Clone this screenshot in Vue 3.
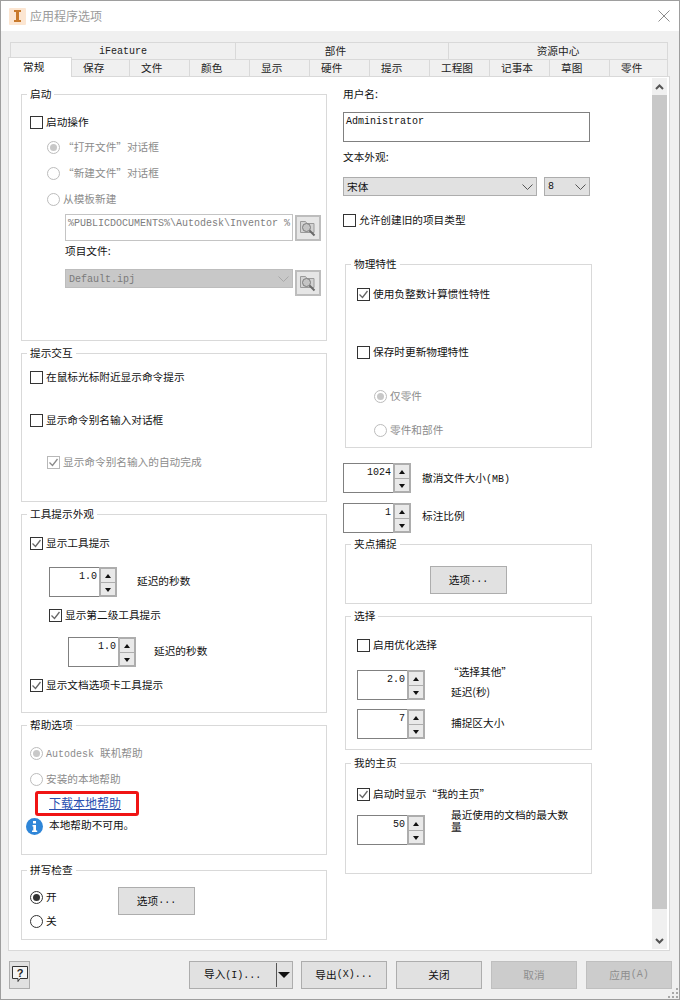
<script setup>
const row2 = [
  { t: '保存', w: 58 }, { t: '文件', w: 60 }, { t: '颜色', w: 60 }, { t: '显示', w: 60 }, { t: '硬件', w: 60 },
  { t: '提示', w: 60 }, { t: '工程图', w: 60 }, { t: '记事本', w: 60 }, { t: '草图', w: 60 }, { t: '零件', w: 58 }
]
</script>

<template>
  <div class="win">
    <header class="title">
      <svg class="appicon" width="17" height="17" viewBox="0 0 17 17">
        <rect width="17" height="17" rx="1" fill="#fce6d2" />
        <path d="M5 2h7v2h-2v8h2v2H5v-2h2V4H5z" fill="#c97a2c" />
      </svg>
      <span class="title-text">应用程序选项</span>
      <svg class="close" width="12" height="12" viewBox="0 0 12 12">
        <path d="M.5.5l11 11M11.500.5l-11 11" stroke="#8c8c8c" fill="none" />
      </svg>
    </header>

    <div class="body">
      <div class="tabs">
        <div class="tabrow first">
          <div class="tab t1a">iFeature</div>
          <div class="tab t1b">部件</div>
          <div class="tab t1c">资源中心</div>
        </div>
        <div class="tabrow second">
          <div v-for="x in row2" :key="x.t" class="tab" :style="{ width: x.w + 'px' }">{{ x.t }}</div>
        </div>
        <div class="tab-active">常规</div>
      </div>

      <div class="panel">
        <div class="content">
          <div class="col left">
            <section class="group g-start">
              <span class="legend">启动</span>
              <label class="line mt19"><i class="cb"></i>启动操作</label>
              <label class="line mt9 in17 dim"><i class="rd on"></i>“打开文件”对话框</label>
              <label class="line mt10 in17 dim"><i class="rd"></i>“新建文件”对话框</label>
              <label class="line mt10 in17 dim"><i class="rd"></i>从模板新建</label>
              <div class="pick mt7">
                <div class="path">%PUBLICDOCUMENTS%\Autodesk\Inventor %</div>
                <button class="browse">
                  <svg width="18" height="18" viewBox="0 0 18 18">
                    <path d="M1.500 2.500h5l1.500 2h7v9h-13.500z" fill="#d2d2d2" stroke="#9a9a9a" />
                    <circle cx="7.500" cy="8.500" r="4" fill="#c4c4c4" stroke="#7c7c7c" />
                    <path d="M10.500 11.500l5 5" stroke="#6a6a6a" stroke-width="2" />
                  </svg>
                </button>
              </div>
              <div class="line mt2 in44">项目文件:</div>
              <div class="pick mt10">
                <div class="sel disabled wide"><span class="mono">Default.ipj</span><svg class="chev" width="11" height="6" viewBox="0 0 11 6"><path d="M.5.500l5 5 5-5" stroke="#a8a8a8" fill="none" /></svg></div>
                <button class="browse lower">
                  <svg width="18" height="18" viewBox="0 0 18 18">
                    <path d="M1.500 2.500h5l1.500 2h7v9h-13.500z" fill="#d2d2d2" stroke="#9a9a9a" />
                    <circle cx="7.500" cy="8.500" r="4" fill="#c4c4c4" stroke="#7c7c7c" />
                    <path d="M10.500 11.500l5 5" stroke="#6a6a6a" stroke-width="2" />
                  </svg>
                </button>
              </div>
            </section>

            <section class="group g-hint">
              <span class="legend">提示交互</span>
              <label class="line mt15"><i class="cb"></i>在鼠标光标附近显示命令提示</label>
              <label class="line mt27"><i class="cb"></i>显示命令别名输入对话框</label>
              <label class="line mt26 in17 dim"><i class="cb checked off"><svg width="11" height="11" viewBox="0 0 11 11"><path d="M1.500 5.500l3 3 5-6.500" stroke="#8a8a8a" stroke-width="1.300" fill="none" /></svg></i>显示命令别名输入的自动完成</label>
            </section>

            <section class="group g-tip">
              <span class="legend">工具提示外观</span>
              <label class="line mt20"><i class="cb"><svg width="11" height="11" viewBox="0 0 11 11"><path d="M1.500 5.500l3 3 5-6.500" stroke="#666" stroke-width="1.300" fill="none" /></svg></i>显示工具提示</label>
              <div class="spinrow mt16 in19">
                <div class="spin"><span class="val mono">1.0</span><div class="btns"><b class="up"></b><b class="dn"></b></div></div>
                <span class="spinlabel l20">延迟的秒数</span>
              </div>
              <label class="line mt10 in19"><i class="cb"><svg width="11" height="11" viewBox="0 0 11 11"><path d="M1.500 5.500l3 3 5-6.500" stroke="#666" stroke-width="1.300" fill="none" /></svg></i>显示第二级工具提示</label>
              <div class="spinrow mt14 in38">
                <div class="spin"><span class="val mono">1.0</span><div class="btns"><b class="up"></b><b class="dn"></b></div></div>
                <span class="spinlabel l18">延迟的秒数</span>
              </div>
              <label class="line mt10"><i class="cb"><svg width="11" height="11" viewBox="0 0 11 11"><path d="M1.500 5.500l3 3 5-6.500" stroke="#666" stroke-width="1.300" fill="none" /></svg></i>显示文档选项卡工具提示</label>
            </section>

            <section class="group g-help">
              <span class="legend">帮助选项</span>
              <label class="line mt19 dim"><i class="rd on"></i><span class="mono brand">Autodesk&nbsp;</span>联机帮助</label>
              <label class="line mt10 dim"><i class="rd"></i>安装的本地帮助</label>
              <a class="link">下载本地帮助<span class="redbox"></span></a>
              <div class="info">
                <svg width="17" height="17" viewBox="0 0 17 17">
                  <circle cx="8.500" cy="8.500" r="8.500" fill="#2f86d8" />
                  <rect x="7" y="3" width="3" height="2.500" fill="#fff" />
                  <path d="M6.500 7H10v5.500h1.200V14H6v-1.500h1.300V8.500H6.500z" fill="#fff" />
                </svg>
                <span>本地帮助不可用。</span>
              </div>
            </section>

            <section class="group g-spell">
              <span class="legend">拼写检查</span>
              <div class="spell">
                <div class="spell-opts">
                  <label class="line"><i class="rd dark on"></i>开</label>
                  <label class="line mt8"><i class="rd dark"></i>关</label>
                </div>
                <button class="btn option">选项<span class="mono">...</span></button>
              </div>
            </section>
          </div>

          <div class="col right">
            <div class="bare first-bare">用户名:</div>
            <div class="textbox"><span class="mono">Administrator</span></div>
            <div class="bare mt7">文本外观:</div>
            <div class="fontrow">
              <div class="sel f1">宋体<svg class="chev" width="11" height="6" viewBox="0 0 11 6"><path d="M.5.500l5 5 5-5" stroke="#555" fill="none" /></svg></div>
              <div class="sel f2"><span class="mono">8</span><svg class="chev" width="11" height="6" viewBox="0 0 11 6"><path d="M.5.500l5 5 5-5" stroke="#555" fill="none" /></svg></div>
            </div>
            <label class="line mt16 flush"><i class="cb"></i>允许创建旧的项目类型</label>

            <section class="group rg g-phys">
              <span class="legend">物理特性</span>
              <label class="line mt21"><i class="cb"><svg width="11" height="11" viewBox="0 0 11 11"><path d="M1.500 5.500l3 3 5-6.500" stroke="#666" stroke-width="1.300" fill="none" /></svg></i>使用负整数计算惯性特性</label>
              <label class="line mt42"><i class="cb"></i>保存时更新物理特性</label>
              <label class="line mt28 in17 dim"><i class="rd on"></i>仅零件</label>
              <label class="line mt18 in17 dim"><i class="rd"></i>零件和部件</label>
            </section>

            <div class="spinrow mt15 flushspin">
              <div class="spin"><span class="val mono">1024</span><div class="btns"><b class="up"></b><b class="dn"></b></div></div>
              <span class="spinlabel l11 small-up">撤消文件大小<span class="mono">(MB)</span></span>
            </div>
            <div class="spinrow mt10 flushspin">
              <div class="spin"><span class="val mono">1</span><div class="btns"><b class="up"></b><b class="dn"></b></div></div>
              <span class="spinlabel l11 small-up2">标注比例</span>
            </div>

            <section class="group rg g-grip">
              <span class="legend">夹点捕捉</span>
              <button class="btn option grip-btn">选项<span class="mono">...</span></button>
            </section>

            <section class="group rg g-select">
              <span class="legend">选择</span>
              <label class="line mt20"><i class="cb"></i>启用优化选择</label>
              <div class="spinrow mt17">
                <div class="spin"><span class="val mono">2.0</span><div class="btns"><b class="up"></b><b class="dn"></b></div></div>
                <div class="stack">
                  <span class="quoted">“选择其他”</span>
                  <span>延迟(秒)</span>
                </div>
              </div>
              <div class="spinrow mt9">
                <div class="spin"><span class="val mono">7</span><div class="btns"><b class="up"></b><b class="dn"></b></div></div>
                <span class="spinlabel l26">捕捉区大小</span>
              </div>
            </section>

            <section class="group rg g-home">
              <span class="legend">我的主页</span>
              <label class="line mt22"><i class="cb"><svg width="11" height="11" viewBox="0 0 11 11"><path d="M1.500 5.500l3 3 5-6.500" stroke="#666" stroke-width="1.300" fill="none" /></svg></i>启动时显示“我的主页”</label>
              <div class="spinrow mt13">
                <div class="spin"><span class="val mono">50</span><div class="btns"><b class="up"></b><b class="dn"></b></div></div>
                <span class="wrap">最近使用的文档的最大数量</span>
              </div>
            </section>
          </div>
        </div>

        <div class="scroll">
          <svg class="arrow" width="9" height="6" viewBox="0 0 9 6"><path d="M1 5l3.500-3.500L8 5" stroke="#555" stroke-width="2" fill="none" /></svg>
          <div class="thumb"></div>
          <div class="track"></div>
          <svg class="arrow" width="9" height="6" viewBox="0 0 9 6"><path d="M1 1l3.500 3.500L8 1" stroke="#555" stroke-width="2" fill="none" /></svg>
        </div>
      </div>

      <footer class="foot">
        <button class="btn qm">
          <svg width="16" height="18" viewBox="0 0 16 18">
            <path d="M.5.500h15v12H8l-2 3v-3H.5z" fill="#f4f4f4" stroke="#333" />
            <text x="8" y="10.500" text-anchor="middle" font-size="11" font-weight="700" font-family="Liberation Sans" fill="#222">?</text>
          </svg>
        </button>
        <button class="btn import">
          <span class="import-text">导入<span class="mono">(I)...</span></span>
          <span class="split"></span>
          <span class="caret"></span>
        </button>
        <button class="btn big export">导出<span class="mono">(X)...</span></button>
        <button class="btn big close-btn">关闭</button>
        <button class="btn big dis cancel">取消</button>
        <button class="btn big dis apply">应用<span class="mono">(A)</span></button>
      </footer>
      <svg class="gripper" width="11" height="11" viewBox="0 0 11 11">
        <path d="M8 0h2v2H8zM4 4h2v2H4zM8 4h2v2H8zM0 8h2v2H0zM4 8h2v2H4zM8 8h2v2H8z" fill="#a8a8a8" />
      </svg>
    </div>
  </div>
</template>

<style>
html, body { margin: 0; background: #f0f0f0; }
</style>

<style scoped>
* { box-sizing: border-box; }
.win {
  width: 680px; height: 1000px; position: relative; overflow: hidden;
  border: 1px solid #9e9e9e;
  background: #f0f0f0; color: #111;
  font: 10.67px/16px "Noto Sans CJK SC", "Liberation Sans", sans-serif;
  display: flex; flex-direction: column;
}
.mono { font-family: "Liberation Mono", "Noto Sans CJK SC", monospace; font-size: 10px; }
.brand { margin-top: 3px; }
.title { height: 30px; flex: none; background: #fff; display: flex; align-items: center; padding: 0 8px; }
.appicon { margin-right: 4px; }
.title-text { color: #9a9a9a; font-size: 12px; }
.close { margin-left: auto; margin-right: 1px; margin-top: -1px; }

.body { flex: 1; display: flex; flex-direction: column; position: relative; padding: 11px 0 0 7px; }
.tabs { position: relative; height: 34px; flex: none; margin-left: 2px; width: 658px; }
.tabrow { display: flex; height: 17px; }
.tabrow.first { border-left: 1px solid #d9d9d9; }
.tabrow.second { padding-left: 62px; }
.tab {
  height: 18px; border: 1px solid #d9d9d9; border-left: 0; background: #f0f0f0;
  font-size: 10.67px; line-height: 16px; color: #222;
}
.first .tab { text-align: center; line-height: 18px; font-family: "Liberation Mono", "Noto Sans CJK SC", monospace; }
.second .tab { padding-left: 11px; }
.first .t1a { width: 225px; font-size: 10px; }
.first .t1b { width: 213px; padding-right: 13px; }
.first .t1c { width: 219px; }
.tab-active {
  position: absolute; left: -2px; top: 15px; width: 64px; height: 20px; z-index: 2;
  background: #fff; border: 1px solid #d9d9d9; border-bottom: 0;
  padding-left: 14px; line-height: 17px; color: #111;
}
.panel {
  flex: none; width: 662px; height: 875px; background: #fff; border: 1px solid #d9d9d9;
  display: flex; position: relative;
}
.content { width: 643px; display: flex; padding: 17px 0 0 12px; overflow: hidden; }
.col { display: flex; flex-direction: column; }
.left { width: 306px; }
.right { width: 249px; margin-left: 16px; }

.group { position: relative; border: 1px solid #d9d9d9; display: flex; flex-direction: column; padding-left: 8px; flex: none; }
.legend {
  position: absolute; left: 5px; top: -9px; background: #fff; padding: 0 3px;
  line-height: 16px; white-space: nowrap;
}
.g-start { height: 247px; }
.g-hint { height: 149px; margin-top: 12px; }
.g-tip { height: 199px; margin-top: 12px; }
.g-help { height: 130px; margin-top: 12px; }
.g-spell { height: 70px; margin-top: 15px; }
.rg { margin-left: 2px; width: 247px; padding-left: 11px; }
.g-phys { height: 184px; margin-top: 36px; }
.g-grip { height: 60px; margin-top: 11px; align-items: flex-start; }
.g-select { height: 134px; margin-top: 12px; }
.g-home { height: 111px; margin-top: 13px; }

.line { display: flex; align-items: center; height: 16px; white-space: nowrap; flex: none; }
.flush { margin-left: 0; }
.bare { height: 16px; flex: none; }
.first-bare { margin-top: -8px; }
.dim { color: #8c8c8c; }
.cb {
  width: 13px; height: 13px; border: 1px solid #333; background: #fff; flex: none;
  margin-right: 3px; display: flex; align-items: center; justify-content: center;
}
.cb.off { border-color: #b8b8b8; }
.rd {
  width: 13px; height: 13px; border: 1px solid #bcbcbc; border-radius: 50%; background: #fff; flex: none;
  margin-right: 3px; position: relative; display: block;
}
.rd.dark { border-color: #333; }
.rd.on::after {
  content: ""; position: absolute; left: 2px; top: 2px; width: 7px; height: 7px; border-radius: 50%; background: #c8c8c8;
}
.rd.dark.on::after { background: #333; }

.mt2 { margin-top: 2px; } .mt7 { margin-top: 7px; } .mt8 { margin-top: 8px; } .mt9 { margin-top: 9px; }
.mt10 { margin-top: 10px; } .mt13 { margin-top: 13px; } .mt14 { margin-top: 14px; } .mt15 { margin-top: 15px; }
.mt16 { margin-top: 16px; } .mt17 { margin-top: 17px; } .mt18 { margin-top: 18px; } .mt19 { margin-top: 19px; }
.mt20 { margin-top: 20px; } .mt21 { margin-top: 21px; } .mt22 { margin-top: 22px; } .mt26 { margin-top: 26px; }
.mt27 { margin-top: 27px; } .mt28 { margin-top: 28px; } .mt42 { margin-top: 42px; }
.in17 { margin-left: 17px; } .in19 { margin-left: 19px; } .in38 { margin-left: 38px; } .in44 { margin-left: 35px; }

.pick { display: flex; margin-left: 35px; align-items: flex-start; gap: 2px; flex: none; }
.path {
  width: 228px; height: 27px; border: 1px solid #c4c4c4; padding: 2px 2px; white-space: nowrap; overflow: hidden;
  color: #7e7e7e; font: 10px/14px "Liberation Mono", monospace;
}
.browse {
  width: 26px; height: 26px; margin: 1px 0 0; padding: 0; background: #e6e6e6; border: 2px solid #bdbdbd;
  display: flex; align-items: center; justify-content: center;
}
.browse.lower { margin-top: 1px; }
.sel {
  height: 19px; background: #e1e1e1; border: 1px solid #adadad; display: flex; align-items: center;
  padding-left: 3px; position: relative; flex: none;
}
.sel.disabled { background: #c8c8c8; border-color: #bdbdbd; color: #7a7a7a; }
.sel.disabled .mono { margin-top: 2px; }
.wide { width: 228px; }
.sel.f1 { width: 194px; }
.sel.f2 { width: 46px; }
.chev { position: absolute; right: 3px; top: 6px; }

.textbox { width: 247px; height: 30px; border: 1px solid #808080; margin-top: 10px; padding: 0 2px; line-height: 14px; flex: none; }
.fontrow { display: flex; gap: 7px; margin-top: 12px; flex: none; }

.spinrow { display: flex; flex: none; }
.spin { width: 68px; height: 30px; border: 1px solid #808080; border-right: 0; position: relative; flex: none; padding-right: 20px; text-align: right; line-height: 13px; }
.val { font-size: 10px; }
.btns {
  position: absolute; right: 0; top: -1px; width: 18px; height: 30px; border: 1px solid #adadad; background: #adadad;
  display: flex; flex-direction: column; gap: 1px; padding: 1px;
}
.btns b { flex: 1; background: #e9e9e9; position: relative; display: block; }
.btns b::after { content: ""; position: absolute; left: 4px; border-left: 3.500px solid transparent; border-right: 3.500px solid transparent; }
.up::after { top: 5px; border-bottom: 4px solid #111; }
.dn::after { top: 5px; border-top: 4px solid #111; }
.spinlabel { margin-top: 6px; }
.l20 { margin-left: 20px; }
.l18 { margin-left: 18px; }
.l11 { margin-left: 11px; }
.l26 { margin-left: 26px; }
.small-up { margin-top: 7px; }
.small-up2 { margin-top: 5px; }
.stack { margin-left: 26px; margin-top: -6px; display: flex; flex-direction: column; gap: 4px; align-items: flex-start; }
.quoted { margin-left: -3px; }
.wrap { width: 122px; margin-left: 26px; margin-top: -6px; line-height: 12px; }

.link { position: relative; margin: 8px 0 0 19px; width: 72px; color: #2a4fb0; text-decoration: underline; height: 16px; flex: none; font-size: 12px; }
.redbox { position: absolute; left: -14px; top: -4px; width: 104px; height: 25px; border: 3px solid #f01414; border-radius: 3px; }
.info { display: flex; align-items: flex-start; margin: 7px 0 0 -4px; gap: 6px; flex: none; }
.info span { margin-top: -1px; }
.spell { display: flex; margin-top: 16px; flex: none; }
.spell-opts { display: flex; flex-direction: column; width: 88px; margin-top: 2px; }
.option { width: 77px; height: 28px; }
.grip-btn { margin: 21px 0 0 73px; }

.btn { background: #e1e1e1; border: 1px solid #adadad; font: inherit; color: #111; padding: 0; display: flex; align-items: center; justify-content: center; flex: none; }

.scroll { width: 15px; margin: 1px 0 1px 0; background: #f0f0f0; display: flex; flex-direction: column; align-items: center; flex: none; }
.arrow { flex: none; margin: 6px 0 5px; }
.thumb { width: 15px; height: 814px; background: #c8c8c8; flex: none; }
.track { flex: 1; }

.foot { display: flex; height: 28px; margin: 10px 0 0 1px; flex: none; position: relative; }
.qm { width: 21px; height: 28px; margin-right: 159px; }
.import { width: 104px; position: relative; justify-content: flex-start; padding-left: 14px; }
.import-text { flex: none; }
.split { position: absolute; left: 86px; top: 1px; width: 1px; height: 24px; background: #555; }
.caret { position: absolute; right: 2px; top: 10px; border-left: 6px solid transparent; border-right: 6px solid transparent; border-top: 6px solid #111; }
.big { width: 86px; }
.export { margin-left: 8px; }
.close-btn { margin-left: 9px; }
.cancel { margin-left: 9px; }
.apply { margin-left: 9px; }
.dis { background: #cccccc; border-color: #bfbfbf; color: #8e8e8e; }
.gripper { position: absolute; right: 0; bottom: 0; }
</style>
